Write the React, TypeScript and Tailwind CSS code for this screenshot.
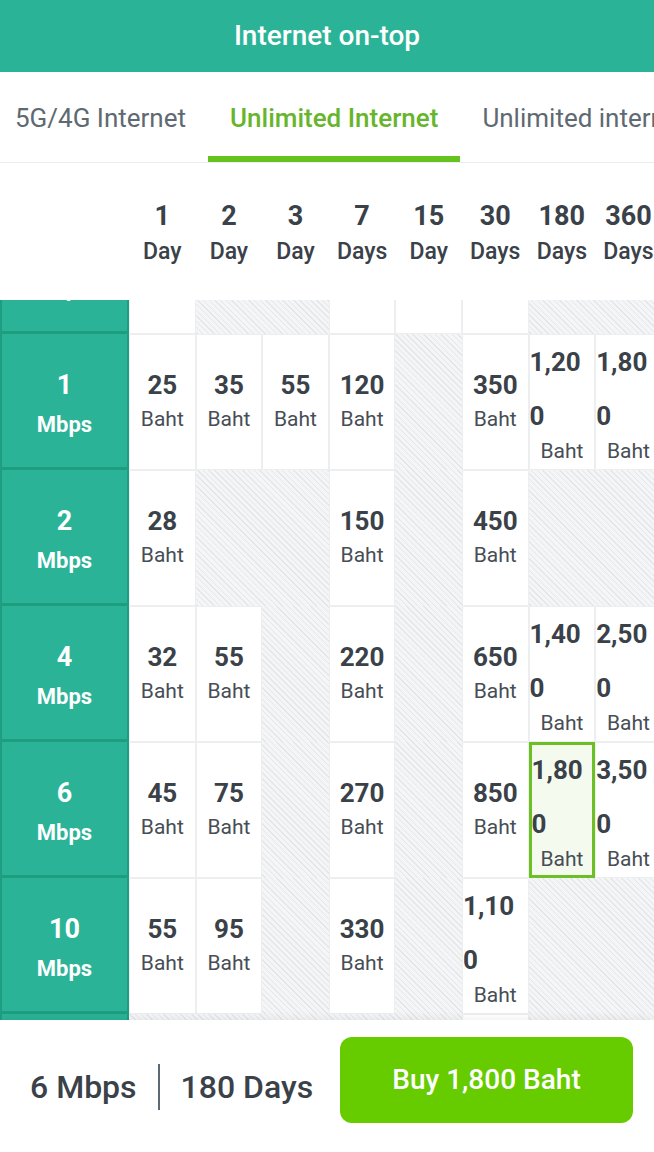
import { useState } from 'react';

const days = [
  { n: '1', label: 'Day' },
  { n: '2', label: 'Day' },
  { n: '3', label: 'Day' },
  { n: '7', label: 'Days' },
  { n: '15', label: 'Day' },
  { n: '30', label: 'Days' },
  { n: '180', label: 'Days' },
  { n: '360', label: 'Days' },
];

type Row = { speed: string; unit: string; prices: (string | null)[] };

const rows: Row[] = [
  { speed: '512', unit: 'Kbps', prices: ['19', null, null, '99', '199', '299', null, null] },
  { speed: '1', unit: 'Mbps', prices: ['25', '35', '55', '120', null, '350', '1,200', '1,800'] },
  { speed: '2', unit: 'Mbps', prices: ['28', null, null, '150', null, '450', null, null] },
  { speed: '4', unit: 'Mbps', prices: ['32', '55', null, '220', null, '650', '1,400', '2,500'] },
  { speed: '6', unit: 'Mbps', prices: ['45', '75', null, '270', null, '850', '1,800', '3,500'] },
  { speed: '10', unit: 'Mbps', prices: ['55', '95', null, '330', null, '1,100', null, null] },
  { speed: '20', unit: 'Mbps', prices: [null, null, null, null, null, '1,500', null, null] },
];

const hatch =
  'bg-[repeating-linear-gradient(45deg,#e4e6e9_0px,#e4e6e9_1px,#f4f5f6_1px,#f4f5f6_4px)]';

function PriceCell({ price, selected, onClick }: { price: string | null; selected: boolean; onClick: () => void }) {
  if (!price) {
    return <div className="h-[136px] w-[66.6px] shrink-0 border border-transparent" />;
  }
  const long = price.length > 3;
  return (
    <button
      onClick={onClick}
      className={`flex h-[136px] w-[66.6px] shrink-0 flex-col items-center justify-center ${
        selected ? 'border-[3px] border-[#6cc024] bg-[#f4faee]' : 'border border-[#eceef0] bg-white'
      }`}
    >
      {long ? (
        <span className="flex w-full flex-col items-center pb-[10px]">
          <span className="w-full break-all text-left text-[26px] font-bold leading-[54px] text-[#3a4148]">
            {price}
          </span>
          <span className="text-[21px] leading-[16px] text-[#474e55]">Baht</span>
        </span>
      ) : (
        <>
          <span className="text-[26px] font-bold leading-[34px] text-[#3a4148]">{price}</span>
          <span className="text-[21px] leading-[34px] text-[#474e55]">Baht</span>
        </>
      )}
    </button>
  );
}

export default function App() {
  const [tab, setTab] = useState(1);
  const [sel, setSel] = useState({ r: 4, c: 6 });

  const tabs = ['5G/4G Internet', 'Unlimited Internet', 'Unlimited internet'];
  const selRow = rows[sel.r];
  const selDay = days[sel.c];

  return (
    <div className="flex h-[1152px] w-full flex-col overflow-hidden bg-white font-['Roboto',sans-serif]">
      {/* Title */}
      <div className="flex h-[72px] shrink-0 items-center justify-center bg-[#2ab397]">
        <h1 className="text-[28px] font-medium text-white">Internet on-top</h1>
      </div>

      {/* Tabs */}
      <div className="flex h-[91px] shrink-0 overflow-hidden whitespace-nowrap border-b border-[#ebedef]">
        {tabs.map((t, i) => (
          <button key={t} onClick={() => setTab(i)} className="flex shrink-0 flex-col justify-end">
            <span
              className={`text-[26px] leading-[90px] ${i === 0 ? 'pl-[15px] pr-[22px]' : 'px-[22px]'} ${
                tab === i ? 'font-medium text-[#67b52c]' : 'text-[#5e6971]'
              }`}
            >
              {t}
            </span>
            <span className={`-mt-[7px] h-[6px] w-full ${tab === i ? 'bg-[#66c21c]' : ''}`} />
          </button>
        ))}
      </div>

      {/* Column headers */}
      <div className="flex h-[137px] shrink-0 overflow-hidden pt-[4px]">
        <div className="w-[129px] shrink-0" />
        {days.map(d => (
          <div key={d.n} className="flex w-[66.6px] shrink-0 flex-col items-center justify-center text-[#3a4148]">
            <span className="text-[27px] font-bold leading-[35px]">{d.n}</span>
            <span className="text-[23px] font-medium leading-[35px]">{d.label}</span>
          </div>
        ))}
      </div>

      {/* Price table */}
      <div className="h-[720px] shrink-0 overflow-hidden">
        <div className="-mt-[102px]">
          {rows.map((row, r) => (
            <div key={row.speed} className="flex">
              <div className="flex h-[136px] w-[129px] shrink-0 flex-col items-center justify-center border-x-2 border-b-[3px] border-[#1e9d81] bg-[#2ab397] pt-[8px] text-white">
                <span className="text-[27px] font-bold leading-[40px]">{row.speed}</span>
                <span className="text-[22px] font-bold leading-[40px]">{row.unit}</span>
              </div>
              <div className={`flex ${hatch}`}>
                {row.prices.map((p, c) => (
                  <PriceCell
                    key={c}
                    price={p}
                    selected={sel.r === r && sel.c === c}
                    onClick={() => setSel({ r, c })}
                  />
                ))}
              </div>
            </div>
          ))}
        </div>
      </div>

      {/* Bottom bar */}
      <div className="flex flex-1 items-center bg-white pb-[12px] pl-[30px] pr-[21px] shadow-[0_-2px_8px_rgba(0,0,0,0.06)]">
        <span className="mt-[14px] text-[32px] font-medium text-[#3a4148]">
          {selRow.speed} {selRow.unit}
        </span>
        <span className="mx-[21px] mt-[14px] h-[46px] w-[2px] bg-[#5e6971]" />
        <span className="mt-[14px] text-[32px] font-medium text-[#3a4148]">
          {selDay.n} {selDay.label}
        </span>
        <button className="ml-auto flex h-[86px] w-[293px] items-center justify-center rounded-[12px] bg-[#66cc00] text-[28px] font-medium text-white">
          Buy {selRow.prices[sel.c]} Baht
        </button>
      </div>
    </div>
  );
}
